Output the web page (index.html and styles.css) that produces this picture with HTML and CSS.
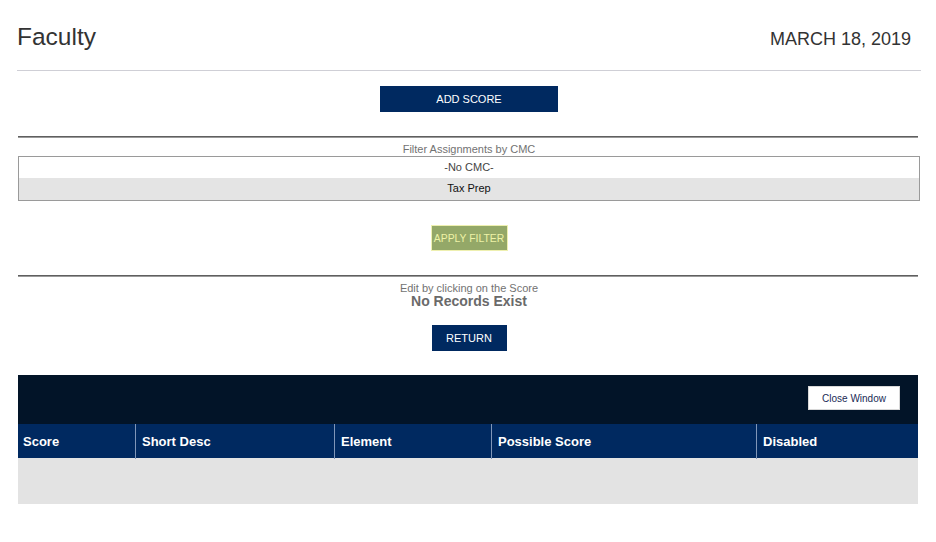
FILE: index.html
```html
<!DOCTYPE html>
<html>
<head>
<meta charset="utf-8">
<title>Faculty</title>
<link rel="stylesheet" href="styles.css">
</head>
<body>
<div class="page">
  <header class="top">
    <h1 class="title">Faculty</h1>
    <div class="date">MARCH 18, 2019</div>
  </header>
  <div class="rule-light"></div>
  <div class="content">
    <div class="center add-wrap"><button class="btn navy add">ADD SCORE</button></div>
    <div class="rule-dark"></div>
    <div class="caption">Filter Assignments by CMC</div>
    <div class="listbox">
      <div class="opt">-No CMC-</div>
      <div class="opt sel">Tax Prep</div>
    </div>
    <div class="center filter-wrap"><button class="btn green">APPLY FILTER</button></div>
    <div class="rule-dark"></div>
    <div class="caption edit">Edit by clicking on the Score</div>
    <div class="none">No Records Exist</div>
    <div class="center return-wrap"><button class="btn navy ret">RETURN</button></div>
    <div class="panel">
      <div class="panel-bar"><button class="close">Close Window</button></div>
      <div class="thead">
        <div class="th first">Score</div>
        <div class="th">Short Desc</div>
        <div class="th">Element</div>
        <div class="th">Possible Score</div>
        <div class="th">Disabled</div>
      </div>
      <div class="tbody"></div>
    </div>
  </div>
</div>
</body>
</html>
```

FILE: styles.css
```css
* { box-sizing: border-box; }
html, body { margin: 0; padding: 0; background: #fff; }
body { font-family: "Liberation Sans", Arial, sans-serif; color: #333; }
.page { padding: 0 15px 0 17px; }
.top {
  display: flex;
  justify-content: space-between;
  align-items: baseline;
  padding-top: 22px;
  height: 70px;
}
.title {
  margin: 0;
  font-size: 24.5px;
  font-weight: normal;
  line-height: 30px;
  color: #333;
}
.date {
  font-size: 18px;
  color: #333;
  margin-right: 10px;
}
.rule-light { height: 1px; background: #cfcfd6; }
.content { margin-left: 1px; width: 902px; }
.center { display: flex; justify-content: center; }
.btn {
  font-family: "Liberation Sans", Arial, sans-serif;
  font-size: 11px;
  border: 0;
  padding: 0;
  height: 26px;
  cursor: pointer;
  white-space: nowrap;
}
.navy { background: #002960; color: #fff; }
.add-wrap { padding-top: 15px; }
.add { width: 178px; }
.rule-dark {
  width: 900px;
  height: 2px;
  background: #5f5f5f;
  border-bottom: 1px solid #9a9a9a;
}
.add-wrap + .rule-dark { margin-top: 24px; }
.caption {
  text-align: center;
  font-size: 11px;
  color: #727272;
  line-height: 13px;
  padding-top: 5px;
}
.listbox {
  border: 1px solid #9a9a9a;
  height: 45px;
}
.opt {
  height: 21px;
  line-height: 21px;
  text-align: center;
  font-size: 11px;
  color: #444;
}
.opt.sel { background: #e4e4e4; color: #111; height: 22px; }
.filter-wrap { padding-top: 24px; padding-bottom: 24px; }
.green {
  width: 77px;
  font-size: 10.4px;
  background: #94a868;
  color: #eef3a6;
  border: 1px solid #eef0b0;
}
.caption.edit { padding-top: 5px; }
.none {
  text-align: center;
  font-size: 14px;
  font-weight: bold;
  color: #6a6a6a;
  line-height: 14px;
  margin-top: -1px;
}
.return-wrap { padding-top: 17px; padding-bottom: 24px; }
.ret { width: 75px; }
.panel { width: 900px; }
.panel-bar {
  background: #021428;
  height: 49px;
  display: flex;
  justify-content: flex-end;
  align-items: flex-start;
  padding: 11px 18px 0 0;
}
.close {
  width: 92px;
  height: 24px;
  background: #fff;
  border: 1px solid #d8d8d8;
  font-family: "Liberation Sans", Arial, sans-serif;
  font-size: 10px;
  color: #1a2a55;
  padding: 0;
}
.thead {
  display: grid;
  grid-template-columns: 117px 199px 157px 265px 1fr;
  background: #002960;
  height: 34px;
}
.th {
  border-left: 1px solid #8096b8;
  color: #fff;
  font-weight: bold;
  font-size: 13px;
  line-height: 35px;
  padding-left: 6px;
}
.th.first { border-left: 0; padding-left: 5px; }
.tbody { background: #e3e3e3; height: 46px; }
```
